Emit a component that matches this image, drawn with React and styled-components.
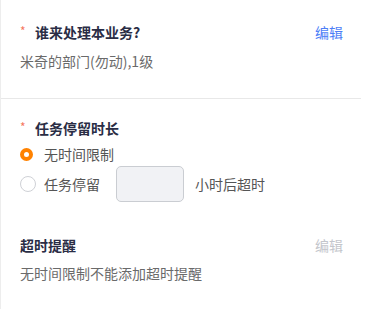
import React from 'react';
import styled, { createGlobalStyle } from 'styled-components';

const GlobalStyle = createGlobalStyle`
    html, body {
        margin: 0;
        padding: 0;
        background: #fff;
    }
    body {
        font-family: "Noto Sans CJK SC", "Noto Sans", sans-serif;
        font-size: 14px;
        line-height: 20px;
    }
`;

const Panel = styled.div`
    width: 360px;
    min-height: 100vh;
    border-left: 1px solid #ededed;
    box-sizing: content-box;
`;

const Section = styled.div`
    padding: ${props => props.$pad};
`;

const Divider = styled.div`
    height: 1px;
    background: #e8e8e8;
`;

const HeadRow = styled.div`
    display: flex;
    align-items: center;
    justify-content: space-between;
    height: 20px;
    margin-top: ${props => props.$top || 0}px;
`;

const Title = styled.div`
    display: flex;
    align-items: center;
    font-weight: 700;
    color: #2a2d45;
`;

const Star = styled.span`
    color: #f5785f;
    font-size: 12px;
    font-weight: 400;
    line-height: 1;
    align-self: flex-start;
    margin-top: 3px;
    width: 7px;
    margin-right: 8px;
`;

const Edit = styled.span`
    color: ${props => (props.$disabled ? '#c4c6cc' : '#4d7ef7')};
    cursor: ${props => (props.$disabled ? 'not-allowed' : 'pointer')};
`;

const Text = styled.div`
    color: #6a6a6a;
    margin-top: ${props => props.$top}px;
`;

const RadioRow = styled.label`
    display: flex;
    align-items: center;
    height: ${props => props.$h}px;
    margin-top: ${props => props.$top}px;
    color: #555;
`;

const RadioBox = styled.span`
    width: 16px;
    display: flex;
    align-items: center;
    margin-right: 8px;
`;

const Dot = styled.span`
    box-sizing: border-box;
    border-radius: 50%;
    width: ${props => (props.$checked ? 13 : 16)}px;
    height: ${props => (props.$checked ? 13 : 16)}px;
    border: ${props => (props.$checked ? '4px solid #ff8200' : '1px solid #cfd1d6')};
    background: #fff;
`;

const HoursInput = styled.input`
    box-sizing: border-box;
    width: 68px;
    height: 36px;
    margin: 0 11px 0 16px;
    border: 1px solid #cacdd2;
    border-radius: 5px;
    background: #f1f2f5;
    outline: none;
`;

function Radio({ checked, children }) {
    return (
        <>
            <RadioBox>
                <Dot $checked={checked} />
            </RadioBox>
            {children}
        </>
    );
}

export default function App() {
    return (
        <>
            <GlobalStyle />
            <Panel>
                <Section $pad="22px 18px 27px 19px">
                    <HeadRow>
                        <Title><Star>*</Star>谁来处理本业务?</Title>
                        <Edit>编辑</Edit>
                    </HeadRow>
                    <Text $top={9}>米奇的部门(勿动),1级</Text>
                </Section>
                <Divider />
                <Section $pad="19px 18px 0 19px">
                    <HeadRow>
                        <Title><Star>*</Star>任务停留时长</Title>
                    </HeadRow>
                    <RadioRow $h={20} $top={6}>
                        <Radio checked>无时间限制</Radio>
                    </RadioRow>
                    <RadioRow $h={36} $top={2}>
                        <Radio>任务停留</Radio>
                        <HoursInput type="text" />
                        小时后超时
                    </RadioRow>
                    <HeadRow $top={33}>
                        <Title>超时提醒</Title>
                        <Edit $disabled>编辑</Edit>
                    </HeadRow>
                    <Text $top={8}>无时间限制不能添加超时提醒</Text>
                </Section>
            </Panel>
        </>
    );
}
